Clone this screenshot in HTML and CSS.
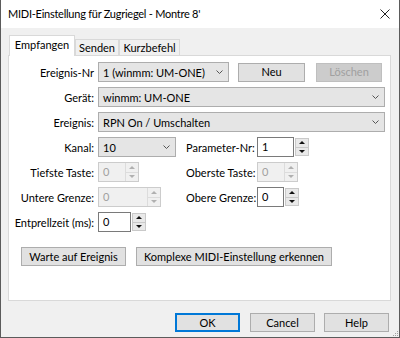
FILE: index.html
```html
<!DOCTYPE html>
<html lang="de">
<head>
    <meta charset="UTF-8">
    <title>MIDI-Einstellung</title>
    <link rel="stylesheet" href="styles.css">
</head>
<body>
    <div class="window">
        <div class="titlebar">
            <span class="title">MIDI-Einstellung für Zugriegel - Montre 8'</span>
            <svg class="close" width="10" height="10" viewBox="0 0 10 10">
                <path d="M0.5 0.5 L9.5 9.5 M9.5 0.5 L0.5 9.5" stroke="#222" stroke-width="1" fill="none"/>
            </svg>
        </div>

        <div class="dialog">
            <div class="tabs">
                <div class="tab active t-recv">Empfangen</div>
                <div class="tab t-send">Senden</div>
                <div class="tab t-short">Kurzbefehl</div>
            </div>

            <div class="panel">
                <div class="form">
                    <div class="row">
                        <label class="lbl">Ereignis-Nr</label>
                        <div class="select w-nr">
                            <span>1 (winmm: UM-ONE)</span>
                            <svg class="chev" width="7" height="4" viewBox="0 0 7 4"><path d="M0.5 0.5 L3.5 3.5 L6.5 0.5" stroke="#555" fill="none"/></svg>
                        </div>
                        <button class="btn btn-neu">Neu</button>
                        <button class="btn btn-del" disabled>Löschen</button>
                    </div>

                    <div class="row">
                        <label class="lbl">Gerät:</label>
                        <div class="select w-full">
                            <span>winmm: UM-ONE</span>
                            <svg class="chev" width="7" height="4" viewBox="0 0 7 4"><path d="M0.5 0.5 L3.5 3.5 L6.5 0.5" stroke="#555" fill="none"/></svg>
                        </div>
                    </div>

                    <div class="row">
                        <label class="lbl">Ereignis:</label>
                        <div class="select w-full">
                            <span>RPN On / Umschalten</span>
                            <svg class="chev" width="7" height="4" viewBox="0 0 7 4"><path d="M0.5 0.5 L3.5 3.5 L6.5 0.5" stroke="#555" fill="none"/></svg>
                        </div>
                    </div>

                    <div class="row">
                        <label class="lbl">Kanal:</label>
                        <div class="cell">
                            <div class="select w-kanal">
                                <span>10</span>
                                <svg class="chev" width="7" height="4" viewBox="0 0 7 4"><path d="M0.5 0.5 L3.5 3.5 L6.5 0.5" stroke="#555" fill="none"/></svg>
                            </div>
                        </div>
                        <label class="lbl2">Parameter-Nr:</label>
                        <div class="spin">
                            <div class="spin-field w-37">1</div>
                            <div class="spin-arrows">
                                <span class="arr up"></span>
                                <span class="arr down"></span>
                            </div>
                        </div>
                    </div>

                    <div class="row">
                        <label class="lbl">Tiefste Taste:</label>
                        <div class="cell">
                            <div class="spin disabled w-41">
                                <div class="spin-field">0</div>
                                <div class="spin-arrows">
                                    <span class="arr up"></span>
                                    <span class="arr down"></span>
                                </div>
                            </div>
                        </div>
                        <label class="lbl2">Oberste Taste:</label>
                        <div class="spin disabled w-41">
                            <div class="spin-field">0</div>
                            <div class="spin-arrows">
                                <span class="arr up"></span>
                                <span class="arr down"></span>
                            </div>
                        </div>
                    </div>

                    <div class="row">
                        <label class="lbl">Untere Grenze:</label>
                        <div class="cell">
                            <div class="spin disabled w-63">
                                <div class="spin-field">0</div>
                                <div class="spin-arrows">
                                    <span class="arr up"></span>
                                    <span class="arr down"></span>
                                </div>
                            </div>
                        </div>
                        <label class="lbl2">Obere Grenze:</label>
                        <div class="spin">
                            <div class="spin-field w-27">0</div>
                            <div class="spin-arrows">
                                <span class="arr up"></span>
                                <span class="arr down"></span>
                            </div>
                        </div>
                    </div>

                    <div class="row">
                        <label class="lbl">Entprellzeit (ms):</label>
                        <div class="spin">
                            <div class="spin-field w-33">0</div>
                            <div class="spin-arrows">
                                <span class="arr up"></span>
                                <span class="arr down"></span>
                            </div>
                        </div>
                    </div>
                </div>

                <div class="actions">
                    <button class="btn btn-wait">Warte auf Ereignis</button>
                    <button class="btn btn-detect">Komplexe MIDI-Einstellung erkennen</button>
                </div>
            </div>

            <div class="footer">
                <button class="btn btn-foot btn-ok">OK</button>
                <button class="btn btn-foot btn-cancel">Cancel</button>
                <button class="btn btn-foot btn-help">Help</button>
            </div>
            <svg class="grip" width="7" height="7" viewBox="0 0 7 7">
                <rect x="5" y="1" width="1" height="1" fill="#a0a0a0"/>
                <rect x="3" y="3" width="1" height="1" fill="#a0a0a0"/>
                <rect x="5" y="3" width="1" height="1" fill="#a0a0a0"/>
                <rect x="1" y="5" width="1" height="1" fill="#a0a0a0"/>
                <rect x="3" y="5" width="1" height="1" fill="#a0a0a0"/>
                <rect x="5" y="5" width="1" height="1" fill="#a0a0a0"/>
            </svg>
        </div>
    </div>
</body>
</html>
```

FILE: styles.css
```css
:root {
    --frame: #5b5b5b;
    --dialog-bg: #f0f0f0;
    --panel-border: #d9d9d9;
    --btn-bg: #e1e1e1;
    --btn-border: #adadad;
    --field-border: #7a7a7a;
    --disabled-text: #a0a0a0;
    --focus: #0078d7;
}

* {
    margin: 0;
    padding: 0;
    box-sizing: border-box;
}

body {
    font-family: 'Lato', sans-serif;
    font-size: 11px;
    color: #000;
    background: #fff;
}

.window {
    width: 400px;
    height: 338px;
    border: 1px solid var(--frame);
    border-top: none;
    display: flex;
    flex-direction: column;
}

.titlebar {
    height: 28px;
    background: #fff;
    display: flex;
    align-items: center;
    padding: 0 9px 0 7px;
}

.title {
    flex: 1;
    font-size: 11px;
    letter-spacing: -0.25px;
    line-height: 16px;
    white-space: nowrap;
}

.close {
    display: block;
}

.dialog {
    flex: 1;
    background: var(--dialog-bg);
    padding: 7px 7px 0 7px;
    display: flex;
    flex-direction: column;
    position: relative;
}

/* tabs */
.tabs {
    display: flex;
    align-items: flex-end;
    height: 20px;
    padding-left: 1px;
}

.tab {
    height: 16px;
    line-height: 15px;
    text-align: center;
    border: 1px solid var(--panel-border);
    border-bottom: none;
    background: var(--dialog-bg);
    white-space: nowrap;
}

.t-recv { width: 66px; }
.t-send { width: 44px; }
.t-short { width: 61px; }

.tab.active {
    height: 21px;
    line-height: 18px;
    background: #fff;
    position: relative;
    z-index: 1;
    margin-bottom: -1px;
}

/* panel */
.panel {
    width: 383px;
    height: 246px;
    background: #fff;
    border: 1px solid var(--panel-border);
    padding: 6px 0 0 0;
}

.form {
    display: flex;
    flex-direction: column;
    gap: 5px;
}

.row {
    display: flex;
    align-items: center;
    height: 20px;
}

.row > * {
    flex-shrink: 0;
}

.lbl {
    width: 85px;
    margin-right: 4px;
    text-align: right;
    white-space: nowrap;
}

.lbl2 {
    width: 71px;
    white-space: nowrap;
}

.cell {
    width: 88px;
}

/* combo boxes */
.select {
    display: flex;
    align-items: center;
    height: 20px;
    background: #e5e5e5;
    border: 1px solid var(--btn-border);
    padding-left: 4px;
    white-space: nowrap;
}

.select .chev {
    margin-left: auto;
    margin-right: 5px;
    flex-shrink: 0;
}

.w-nr { width: 131px; }
.w-full { width: 287px; }
.w-kanal { width: 78px; }

/* spin boxes */
.spin {
    display: flex;
    height: 20px;
}

.spin-field {
    height: 20px;
    line-height: 18px;
    padding-left: 4px;
    border: 1px solid var(--field-border);
    background: #fff;
}

.w-37 { width: 37px; }
.w-27 { width: 27px; }
.w-33 { width: 33px; }

.spin-arrows {
    width: 14px;
    margin: 1px 0 1px 1px;
    border: 1px solid #c9c9c9;
    background: #e9e9e9;
    display: flex;
    flex-direction: column;
}

.arr {
    flex: 1;
    display: flex;
    align-items: center;
    justify-content: center;
}

.arr.up {
    border-bottom: 1px solid #c9c9c9;
}

.arr::before {
    content: "";
    width: 0;
    height: 0;
    border-left: 3px solid transparent;
    border-right: 3px solid transparent;
}

.arr.up::before {
    border-bottom: 3px solid #111;
}

.arr.down::before {
    border-top: 3px solid #111;
}

.spin.disabled {
    border: 1px solid #cccccc;
    background: #f0f0f0;
}

.spin.disabled .spin-field {
    flex: 1;
    height: 18px;
    line-height: 17px;
    border: none;
    background: transparent;
    color: var(--disabled-text);
}

.spin.disabled .spin-arrows {
    margin: 0;
    border: none;
    border-left: 1px solid #dcdcdc;
    background: transparent;
    width: 13px;
}

.spin.disabled .arr.up {
    border-bottom: 1px solid #dcdcdc;
}

.spin.disabled .arr.up::before {
    border-bottom-color: #b0b0b0;
}

.spin.disabled .arr.down::before {
    border-top-color: #b0b0b0;
}

.w-41 { width: 41px; }
.w-63 { width: 63px; }

/* buttons */
.btn {
    font-family: inherit;
    font-size: 11px;
    color: #000;
    background: var(--btn-bg);
    border: 1px solid var(--btn-border);
    height: 19px;
    line-height: 16px;
    white-space: nowrap;
}

.btn:disabled {
    background: #cccccc;
    border-color: #bfbfbf;
    color: var(--disabled-text);
}

.btn-neu {
    width: 67px;
    margin-left: 9px;
}

.btn-del {
    width: 66px;
    margin-left: 11px;
}

.actions {
    display: flex;
    margin-top: 15px;
    padding-left: 12px;
}

.btn-wait {
    width: 105px;
}

.btn-detect {
    width: 196px;
    margin-left: 10px;
}

.footer {
    display: flex;
    justify-content: flex-end;
    margin-top: 12px;
    padding-right: 3px;
}

.btn-foot {
    width: 65px;
}

.btn-ok {
    border: 2px solid var(--focus);
}

.btn-cancel {
    margin-left: 10px;
}

.btn-help {
    margin-left: 9px;
}

.grip {
    position: absolute;
    right: 0;
    bottom: 0;
}
```
